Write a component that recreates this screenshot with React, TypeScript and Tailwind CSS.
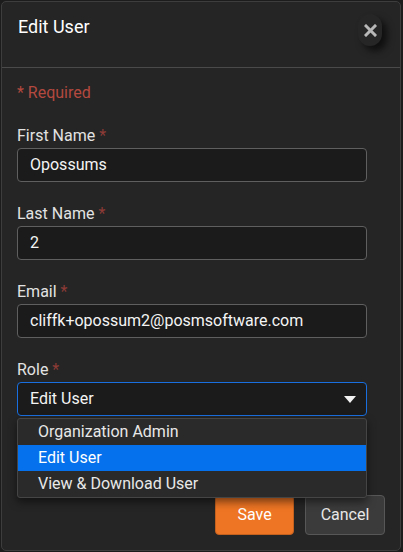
import React from "react";

const font = { fontFamily: "Roboto, 'Noto Sans', sans-serif" };

function Field({ label, value }: { label: string; value: string }) {
  return (
    <div className="mb-[22px]">
      <div className="h-[20px] leading-[20px] text-[16px] text-[#e2e2e2] mb-[2px]">
        {label} <span className="text-[#8e3b36]">*</span>
      </div>
      <div className="w-[350px] h-[34px] rounded-[4px] border border-[#5f5f5f] bg-[#1b1b1b] px-[12px] flex items-center text-[16px] text-[#f4f4f4]">
        {value}
      </div>
    </div>
  );
}

export default function App() {
  return (
    <div className="w-[403px] h-[552px] bg-[#1c1c1c] overflow-hidden" style={font}>
      <div className="ml-[1px] mt-[1px] w-[400px] h-[550px] rounded-[5px] border border-[#3d3d3d] bg-[#252525] relative">
        <div className="h-[66px] border-b border-[#4a4a4a] flex items-start justify-between pl-[16px] pr-[20px] pt-[14px]">
          <div className="text-[18px] leading-[22px] text-white">Edit User</div>
          <button className="-mt-[2px] w-[24px] h-[32px] rounded-full bg-[#262626] shadow-[5px_5px_7px_rgba(0,0,0,0.6)] flex items-center justify-center -mr-[2px]">
            <svg width="13" height="13" viewBox="0 0 13 13">
              <path d="M2 2 L11 11 M11 2 L2 11" stroke="#b8b8b8" strokeWidth="3" strokeLinecap="square" />
            </svg>
          </button>
        </div>
        <div className="px-[15px] pt-[15px]">
          <div className="h-[20px] leading-[20px] text-[16px] text-[#b3493f] mb-[23px]">* Required</div>
          <Field label="First Name" value="Opossums" />
          <Field label="Last Name" value="2" />
          <Field label="Email" value="cliffk+opossum2@posmsoftware.com" />
          <div>
            <div className="h-[20px] leading-[20px] text-[16px] text-[#e2e2e2] mb-[2px]">
              Role <span className="text-[#8e3b36]">*</span>
            </div>
            <div className="relative w-[350px]">
              <div className="h-[34px] rounded-[4px] border border-[#1a6fe0] bg-[#1b1b1b] px-[12px] flex items-center justify-between text-[16px] text-[#f4f4f4]">
                <span>Edit User</span>
                <svg width="12" height="7" viewBox="0 0 12 7" className="mr-[-2px]">
                  <path d="M0 0 L12 0 L6 7 Z" fill="#f2f2f2" />
                </svg>
              </div>
              <div className="absolute left-0 top-[36px] w-[350px] rounded-[3px] border border-[#454545] bg-[#2a2a2a] shadow-[0_4px_8px_rgba(0,0,0,0.5)] z-10 text-[16px] text-[#e8e8e8]">
                <div className="h-[26px] leading-[26px] pl-[20px]">Organization Admin</div>
                <div className="h-[26px] leading-[26px] pl-[20px] bg-[#0671ec] text-white">Edit User</div>
                <div className="h-[26px] leading-[26px] pl-[20px]">View &amp; Download User</div>
              </div>
            </div>
          </div>
          <div className="mt-[79px] flex justify-end gap-[11px]">
            <button className="w-[79px] h-[40px] rounded-[4px] bg-[#ee7524] border border-[#c4611f] text-white text-[16px]">
              Save
            </button>
            <button className="w-[80px] h-[40px] rounded-[4px] bg-[#3b3b3b] border border-[#575757] text-[#e8e8e8] text-[16px]">
              Cancel
            </button>
          </div>
        </div>
      </div>
    </div>
  );
}
